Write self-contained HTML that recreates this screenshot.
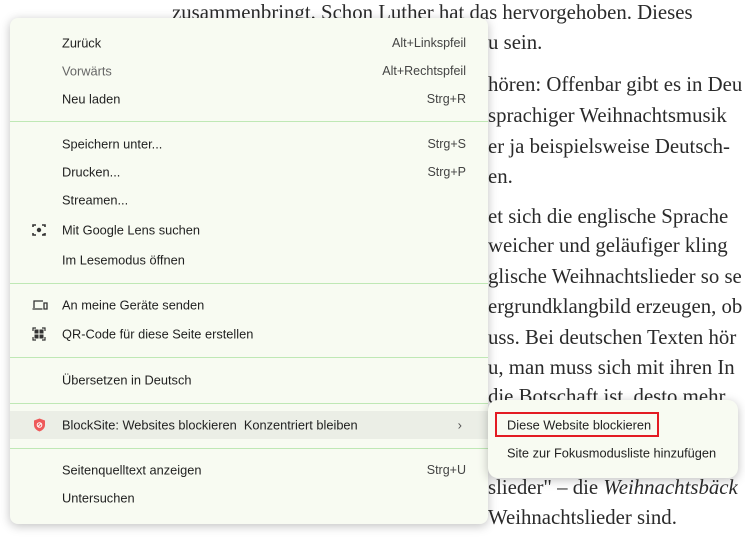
<!DOCTYPE html>
<html><head><meta charset="utf-8"><style>
body{margin:0;width:745px;height:539px;overflow:hidden;background:#fff;position:relative;font-family:"Liberation Sans","DejaVu Sans",sans-serif}
.a{position:absolute;font-family:"Liberation Serif","DejaVu Serif",serif;font-size:20.8px;color:#2a2a2a;white-space:nowrap;line-height:1}
.menu{position:absolute;left:10px;top:18px;width:478px;height:506px;background:#f8fbf2;border-radius:8px;box-shadow:0 2px 10px rgba(0,0,0,.25)}
.i{position:absolute;left:52px;font-size:12.8px;color:#1f1f1f;white-space:nowrap;transform:translateY(-50%)}
.k{position:absolute;right:22px;font-size:12.5px;color:#444;transform:translateY(-50%)}
.s{position:absolute;left:0;right:0;height:1px;background:#bfe8b5}
.ic{position:absolute;left:22px;transform:translateY(-50%)}
.sub{position:absolute;left:488px;top:400px;width:250px;height:78px;background:#f8fbf2;border-radius:10px;box-shadow:0 2px 10px rgba(0,0,0,.25)}
</style></head><body>
<div class="a" style="left:172px;top:3px">zusammenbringt. Schon Luther hat das hervorgehoben. Dieses</div>
<div class="a" style="left:488px;top:33px">u sein.</div>
<div class="a" style="left:488px;top:75px">hören: Offenbar gibt es in Deu</div>
<div class="a" style="left:488px;top:106px">sprachiger Weihnachtsmusik</div>
<div class="a" style="left:488px;top:137px">er ja beispielsweise Deutsch-</div>
<div class="a" style="left:488px;top:167px">en.</div>
<div class="a" style="left:488px;top:207px">et sich die englische Sprache</div>
<div class="a" style="left:488px;top:236px">weicher und geläufiger kling</div>
<div class="a" style="left:488px;top:267px">glische Weihnachtslieder so se</div>
<div class="a" style="left:488px;top:297px">ergrundklangbild erzeugen, ob</div>
<div class="a" style="left:488px;top:328px">uss. Bei deutschen Texten hör</div>
<div class="a" style="left:488px;top:358px">u, man muss sich mit ihren In</div>
<div class="a" style="left:488px;top:387px">die Botschaft ist, desto mehr</div>
<div class="a" style="left:488px;top:478px">slieder" – die <i>Weihnachtsbäck</i></div>
<div class="a" style="left:488px;top:508px">Weihnachtslieder sind.</div>
<div class="menu">
<div class="i" style="top:25px">Zurück</div><div class="k" style="top:25px">Alt+Linkspfeil</div>
<div class="i" style="top:53px;color:#666">Vorwärts</div><div class="k" style="top:53px">Alt+Rechtspfeil</div>
<div class="i" style="top:81px">Neu laden</div><div class="k" style="top:81px">Strg+R</div>
<div class="s" style="top:103px"></div>
<div class="i" style="top:126px">Speichern unter...</div><div class="k" style="top:126px">Strg+S</div>
<div class="i" style="top:154px">Drucken...</div><div class="k" style="top:154px">Strg+P</div>
<div class="i" style="top:182px">Streamen...</div>
<svg class="ic" style="top:212px" width="14" height="14" viewBox="0 0 14 14"><path d="M1 4V2h3M10 2h3v2M13 10v2h-3M4 12H1v-2" fill="none" stroke="#333" stroke-width="1.6"/><circle cx="7" cy="7" r="2.2" fill="#333"/><circle cx="11.5" cy="11.5" r="1" fill="#333"/></svg>
<div class="i" style="top:212px">Mit Google Lens suchen</div>
<div class="i" style="top:242px">Im Lesemodus öffnen</div>
<div class="s" style="top:265px"></div>
<svg class="ic" style="top:287px" width="16" height="12" viewBox="0 0 16 12"><path d="M2 9V2h9M0.5 10h10M12 4h3v6h-3z" fill="none" stroke="#333" stroke-width="1.3"/></svg>
<div class="i" style="top:287px">An meine Geräte senden</div>
<svg class="ic" style="top:316px" width="14" height="14" viewBox="0 0 14 14"><rect x="2.5" y="2.5" width="4" height="4" fill="#333"/><rect x="7.5" y="2.5" width="4" height="4" fill="#333"/><rect x="2.5" y="7.5" width="4" height="4" fill="#333"/><rect x="7.5" y="7.5" width="4" height="4" fill="#333"/><path d="M1 4V1h3M10 1h3v3M13 10v3h-3M4 13H1v-3" fill="none" stroke="#333" stroke-width="1.2"/></svg>
<div class="i" style="top:316px">QR-Code für diese Seite erstellen</div>
<div class="s" style="top:339px"></div>
<div class="i" style="top:362px">Übersetzen in Deutsch</div>
<div class="s" style="top:385px"></div>
<div style="position:absolute;left:0;right:0;top:393px;height:28px;background:#ebeee6"></div>
<svg class="ic" style="top:407px;left:23px" width="13" height="14" viewBox="0 0 13 14"><path d="M6.5 0.5L12 2.5V7c0 3-2.5 5.5-5.5 6.5C3.5 12.5 1 10 1 7V2.5z" fill="#ee5a5a"/><circle cx="6.5" cy="7" r="2.3" fill="none" stroke="#fff" stroke-width="1"/><path d="M5 8.5l3-3" stroke="#fff" stroke-width="1"/></svg>
<div class="i" style="top:407px">BlockSite: Websites blockieren &nbsp;Konzentriert bleiben</div>
<div class="k" style="top:407px;right:26px;font-size:13px;color:#555">›</div>
<div class="s" style="top:430px"></div>
<div class="i" style="top:452px">Seitenquelltext anzeigen</div><div class="k" style="top:452px">Strg+U</div>
<div class="i" style="top:480px">Untersuchen</div>
</div>
<div class="sub">
<div style="position:absolute;left:7px;top:12px;width:160px;height:21px;border:2.5px solid #e31b23"></div>
<div class="i" style="left:19px;top:25px">Diese Website blockieren</div>
<div class="i" style="left:19px;top:53px">Site zur Fokusmodusliste hinzufügen</div>
</div>
</body></html>
